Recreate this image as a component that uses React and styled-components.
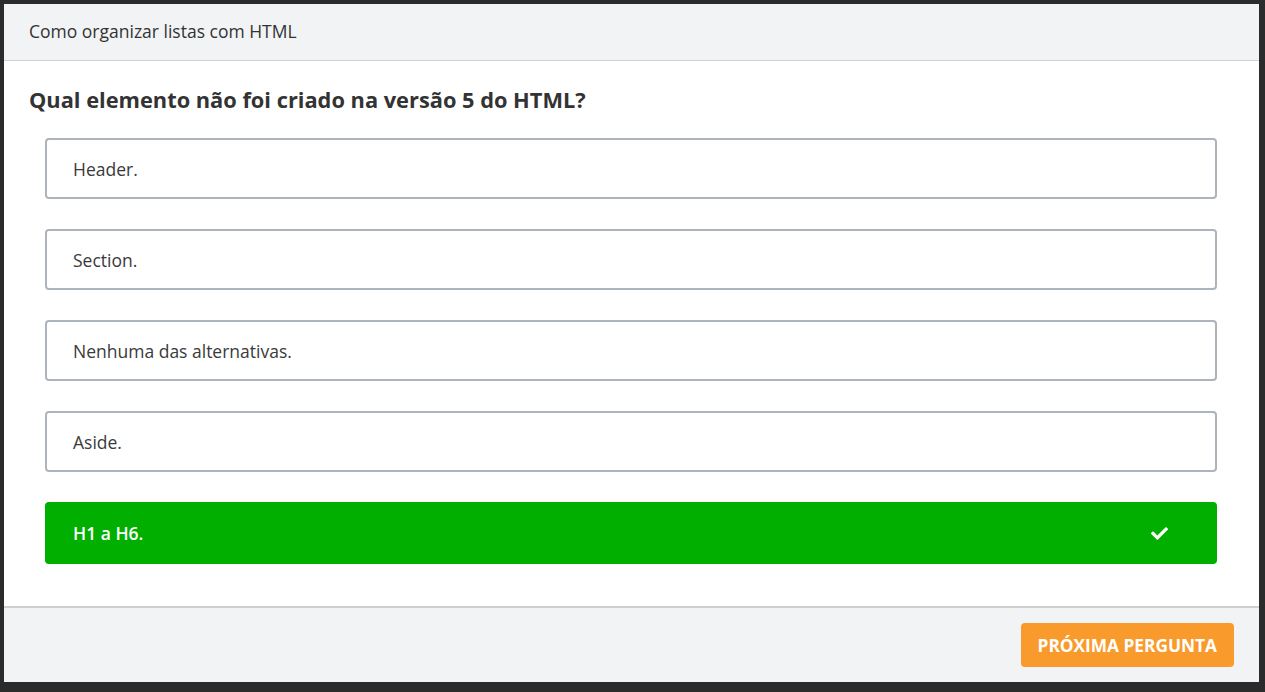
import React from "react";
import styled, { createGlobalStyle } from "styled-components";
import { FaCheck } from "react-icons/fa";

const GlobalStyle = createGlobalStyle`
  html, body {
    margin: 0;
    padding: 0;
    background: #2b2b2b;
  }
  body {
    font-family: "Open Sans", "Noto Sans", Arial, sans-serif;
    color: #333;
  }
  * { box-sizing: border-box; }
`;

const Frame = styled.div`
  padding: 4px 6px 10px 4px;
  height: 692px;
`;

const Card = styled.div`
  background: #fff;
  height: 678px;
  display: flex;
  flex-direction: column;
`;

const Header = styled.div`
  height: 57px;
  background: #f2f3f5;
  border-bottom: 1px solid #cfd2d6;
  display: flex;
  align-items: center;
  padding: 0 25px 2px;
  font-size: 17.5px;
  color: #333;
`;

const Body = styled.div`
  flex: 1;
  padding: 24px 42px 0 25px;
`;

const Question = styled.h2`
  margin: 0 0 23px;
  font-size: 21.8px;
  line-height: 30px;
  font-weight: 700;
  color: #333;
`;

const Options = styled.div`
  display: flex;
  flex-direction: column;
  gap: 30px;
  padding-left: 16px;
`;

const Option = styled.div`
  height: ${(p) => (p.$correct ? "62px" : "61px")};
  border-radius: 4px;
  border: ${(p) => (p.$correct ? "none" : "2px solid #adb4bc")};
  background: ${(p) => (p.$correct ? "#00af00" : "#fff")};
  color: ${(p) => (p.$correct ? "#fff" : "#3a3a3a")};
  font-weight: ${(p) => (p.$correct ? 600 : 400)};
  font-size: 17.5px;
  display: flex;
  align-items: center;
  justify-content: space-between;
  padding: 0 49px 0 ${(p) => (p.$correct ? "28px" : "26px")};
`;

const Footer = styled.div`
  height: 76px;
  background: #f2f3f5;
  border-top: 2px solid #cdcfd2;
  display: flex;
  align-items: flex-start;
  justify-content: flex-end;
  padding: 15px 25px 0;
`;

const NextButton = styled.button`
  height: 44px;
  padding: 0 17px;
  background: #f99a2c;
  color: #fff;
  border: none;
  border-radius: 4px;
  font-family: "Open Sans", Arial, sans-serif;
  font-size: 17.3px;
  font-weight: 700;
  text-transform: uppercase;
  cursor: pointer;
`;

const answers = [
  { text: "Header." },
  { text: "Section." },
  { text: "Nenhuma das alternativas." },
  { text: "Aside." },
  { text: "H1 a H6.", correct: true },
];

export default function App() {
  return (
    <Frame>
      <GlobalStyle />
      <Card>
        <Header>Como organizar listas com HTML</Header>
        <Body>
          <Question>Qual elemento não foi criado na versão 5 do HTML?</Question>
          <Options>
            {answers.map((a, i) => (
              <Option key={i} $correct={a.correct}>
                <span>{a.text}</span>
                {a.correct && <FaCheck size={17} />}
              </Option>
            ))}
          </Options>
        </Body>
        <Footer>
          <NextButton>Próxima pergunta</NextButton>
        </Footer>
      </Card>
    </Frame>
  );
}
